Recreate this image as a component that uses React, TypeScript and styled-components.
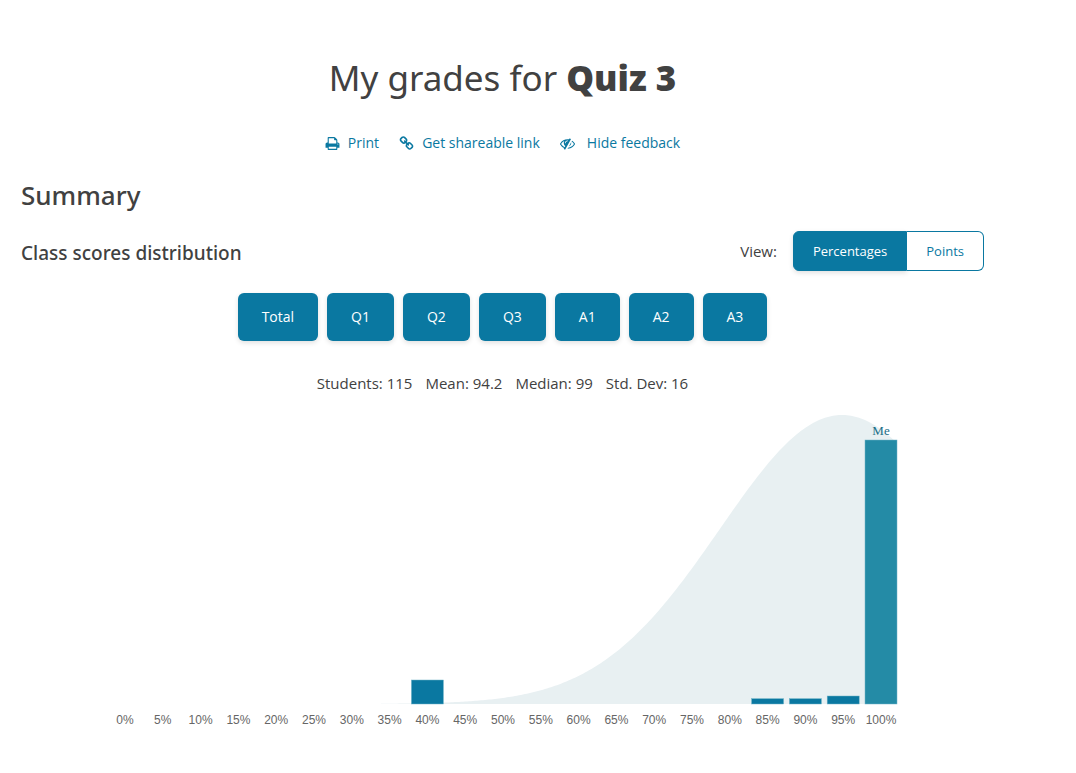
import React, { useState } from "react";
import styled, { createGlobalStyle, css } from "styled-components";

const teal = "#0a78a1";
const ink = "#414141";

const GlobalStyle = createGlobalStyle`
  *, *::before, *::after { box-sizing: border-box; }
  body {
    margin: 0;
    background: #fff;
    color: ${ink};
    font-family: "Open Sans", "Noto Sans", sans-serif;
    font-size: 15px;
    line-height: 24px;
  }
`;

const Page = styled.main`
  display: flex;
  flex-direction: column;
  padding: 48px 92px 24px 21px;
`;

const Title = styled.h1`
  margin: 0;
  text-align: center;
  font-family: "Noto Sans", "Open Sans", sans-serif;
  font-size: 35px;
  font-weight: 400;
  line-height: 60px;

  strong { font-weight: 900; }
`;

const Actions = styled.nav`
  display: flex;
  justify-content: center;
  gap: 20px;
  margin-top: 23px;
`;

const ActionLink = styled.a<{ $gap: number }>`
  display: inline-flex;
  align-items: center;
  gap: ${(p) => p.$gap}px;
  color: ${teal};
  font-size: 14px;
  text-decoration: none;
`;

const Glyph = styled.svg`
  width: 15px;
  height: 15px;
  fill: currentColor;
`;

const SectionTitle = styled.h2`
  margin: 22px 0 0;
  font-family: "Noto Sans", "Open Sans", sans-serif;
  font-size: 26px;
  font-weight: 500;
  line-height: 36px;
`;

const ChartHeader = styled.div`
  display: flex;
  align-items: center;
  justify-content: space-between;
  margin-top: 18px;
`;

const ChartTitle = styled.h3`
  margin: 0;
  padding-top: 4px;
  font-family: "Noto Sans", "Open Sans", sans-serif;
  font-size: 19px;
  font-weight: 500;
  line-height: 28px;
`;

const ViewPicker = styled.div`
  display: flex;
  align-items: center;
  gap: 16px;
`;

const Segments = styled.div`
  display: flex;
`;

const Segment = styled.button<{ $active: boolean }>`
  height: 40px;
  padding: 0 19px;
  border: 1px solid ${teal};
  background: #fff;
  color: ${teal};
  font: inherit;
  font-size: 13px;
  cursor: pointer;

  &:first-child { border-radius: 6px 0 0 6px; }
  &:last-child { border-radius: 0 6px 6px 0; border-left: 0; }

  ${(p) => p.$active && css`
    background: ${teal};
    color: #fff;
    box-shadow: 0 2px 5px rgba(0, 0, 0, 0.12);
  `}
`;

const Filters = styled.div`
  display: flex;
  justify-content: center;
  gap: 9px;
  margin-top: 22px;
`;

const FilterButton = styled.button`
  height: 48px;
  padding: 0 24px;
  border: 0;
  border-radius: 6px;
  background: ${teal};
  color: #fff;
  font: inherit;
  font-size: 14px;
  box-shadow: 0 2px 5px rgba(0, 0, 0, 0.12);
  cursor: pointer;
`;

const Stats = styled.div`
  display: flex;
  justify-content: center;
  gap: 13px;
  margin-top: 30px;
`;

const Chart = styled.svg`
  display: block;
  width: 100%;
  margin-top: 13px;
`;

const AxisLabel = styled.text`
  fill: #666;
  font-family: "Liberation Sans", Arial, sans-serif;
  font-size: 12px;
  text-anchor: middle;
`;

const MeLabel = styled.text`
  fill: #1a6e87;
  font-family: "Liberation Serif", "Times New Roman", serif;
  font-size: 13px;
  text-anchor: middle;
`;

const icons = {
  print:
    "M448 1536h896v-256h-896v256zm0-640h896v-384h-160q-40 0-68-28t-28-68v-160h-640v640zm1152 64q0-26-19-45t-45-19-45 19-19 45 19 45 45 19 45-19 19-45zm128 0v416q0 13-9.5 22.5t-22.5 9.5h-224v160q0 40-28 68t-68 28h-960q-40 0-68-28t-28-68v-160h-224q-13 0-22.5-9.5t-9.5-22.5v-416q0-79 56.5-135.5t135.5-56.5h64v-544q0-40 28-68t68-28h672q40 0 88 20t76 48l152 152q28 28 48 76t20 88v256h64q79 0 135.5 56.5t56.5 135.5z",
  link:
    "M1520 1216q0-40-28-68l-208-208q-28-28-68-28-42 0-72 32 3 3 19 18.5t21.5 21.5 15 19 13 25.5 3.5 27.5q0 40-28 68t-68 28q-15 0-27.5-3.5t-25.5-13-19-15-21.5-21.5-18.5-19q-33 31-33 73 0 40 28 68l206 207q27 27 68 27 40 0 68-26l147-146q28-28 28-67zm-703-705q0-40-28-68l-206-207q-28-28-68-28-39 0-68 27l-147 146q-28 28-28 67 0 40 28 68l208 208q27 27 68 27 42 0 72-31-3-3-19-18.5t-21.5-21.5-15-19-13-25.5-3.5-27.5q0-40 28-68t68-28q15 0 27.5 3.5t25.5 13 19 15 21.5 21.5 18.5 19q33-31 33-73zm895 705q0 120-85 203l-147 146q-83 83-203 83-121 0-204-85l-206-207q-83-83-83-203 0-123 88-209l-88-88q-86 88-208 88-120 0-204-84l-208-208q-84-84-84-204t85-203l147-146q83-83 203-83 121 0 204 85l206 207q83 83 83 203 0 123-88 209l88 88q86-88 208-88 120 0 204 84l208 208q84 84 84 204z",
  eyeSlash:
    "M555 1335l78-141q-87-63-136-159t-49-203q0-121 61-225-229 117-381 353 167 258 427 375zm389-759q0-20-14-34t-34-14q-125 0-214.5 89.5t-89.5 214.5q0 20 14 34t34 14 34-14 14-34q0-86 61-147t147-61q20 0 34-14t14-34zm363-191q0 7-1 9-105 188-315 566t-316 567l-49 89q-10 16-28 16-12 0-134-70-16-10-16-28 0-12 44-87-143-65-263.5-173t-208.5-245q-20-31-20-69t20-69q153-235 380-371t496-136q89 0 180 17l54-97q10-16 28-16 5 0 18 6t31 15.5 33 18.5 31.5 18.5 19.5 11.5q16 10 16 27zm37 447q0 139-79 253.5t-209 164.5l280-502q8 45 8 84zm448 128q0 35-20 69-39 64-109 145-150 172-347.5 267t-419.5 95l74-132q212-18 392.5-137t301.5-307q-115-179-282-294l63-112q95 64 182.5 153t144.5 184q20 34 20 69z",
};

const actions: { label: string; icon: keyof typeof icons; gap: number }[] = [
  { label: "Print", icon: "print", gap: 8 },
  { label: "Get shareable link", icon: "link", gap: 8 },
  { label: "Hide feedback", icon: "eyeSlash", gap: 12 },
];

const filters = ["Total", "Q1", "Q2", "Q3", "A1", "A2", "A3"];
const stats = ["Students: 115", "Mean: 94.2", "Median: 99", "Std. Dev: 16"];
const views = ["Percentages", "Points"];

// Number of students in each 5% bucket that has any.
const counts = [
  { percent: 40, students: 9 },
  { percent: 85, students: 2 },
  { percent: 90, students: 2 },
  { percent: 95, students: 3 },
  { percent: 100, students: 99, mine: true },
];

const baseline = 296;
const xOf = (percent: number) => 104 + percent * 7.56;
const ticks = Array.from({ length: 21 }, (_, i) => i * 5);

// Normal curve drawn behind the bars, up to the right edge of the last one.
const curve = (() => {
  const points: string[] = [];
  for (let x = 360; x <= 876; x += 2) {
    const d = (x - 821) / 122;
    points.push(`${x},${(baseline - 289 * Math.exp((-d * d) / 2)).toFixed(2)}`);
  }
  return `M360,${baseline}L${points.join("L")}L876,${baseline}Z`;
})();

function Distribution() {
  return (
    <Chart viewBox="0 0 963 325" role="img" aria-label="Class scores distribution">
      <path d={curve} fill="#e8f0f2" />
      {counts.map(({ percent, students, mine }) => {
        const height = (students * 264) / 99;
        return (
          <rect
            key={percent}
            x={xOf(percent) - 16}
            y={baseline - height}
            width={32}
            height={height}
            fill={mine ? "#248ba6" : teal}
            stroke="#6fb3c8"
            strokeWidth={0.5}
          />
        );
      })}
      <MeLabel x={860} y={27}>Me</MeLabel>
      {ticks.map((t) => (
        <AxisLabel key={t} x={xOf(t)} y={316}>{t}%</AxisLabel>
      ))}
    </Chart>
  );
}

export default function App() {
  const [view, setView] = useState(views[0]);
  return (
    <>
      <GlobalStyle />
      <Page>
        <Title>My grades for <strong>Quiz 3</strong></Title>
        <Actions>
          {actions.map((a) => (
            <ActionLink key={a.label} href="#" $gap={a.gap}>
              <Glyph viewBox="0 0 1792 1792" aria-hidden="true">
                <path d={icons[a.icon]} />
              </Glyph>
              {a.label}
            </ActionLink>
          ))}
        </Actions>
        <SectionTitle>Summary</SectionTitle>
        <ChartHeader>
          <ChartTitle>Class scores distribution</ChartTitle>
          <ViewPicker>
            <span id="view-label">View:</span>
            <Segments role="group" aria-labelledby="view-label">
              {views.map((v) => (
                <Segment key={v} $active={v === view} aria-pressed={v === view} onClick={() => setView(v)}>
                  {v}
                </Segment>
              ))}
            </Segments>
          </ViewPicker>
        </ChartHeader>
        <Filters>
          {filters.map((f) => (
            <FilterButton key={f}>{f}</FilterButton>
          ))}
        </Filters>
        <Stats>
          {stats.map((s) => (
            <span key={s}>{s}</span>
          ))}
        </Stats>
        <Distribution />
      </Page>
    </>
  );
}
